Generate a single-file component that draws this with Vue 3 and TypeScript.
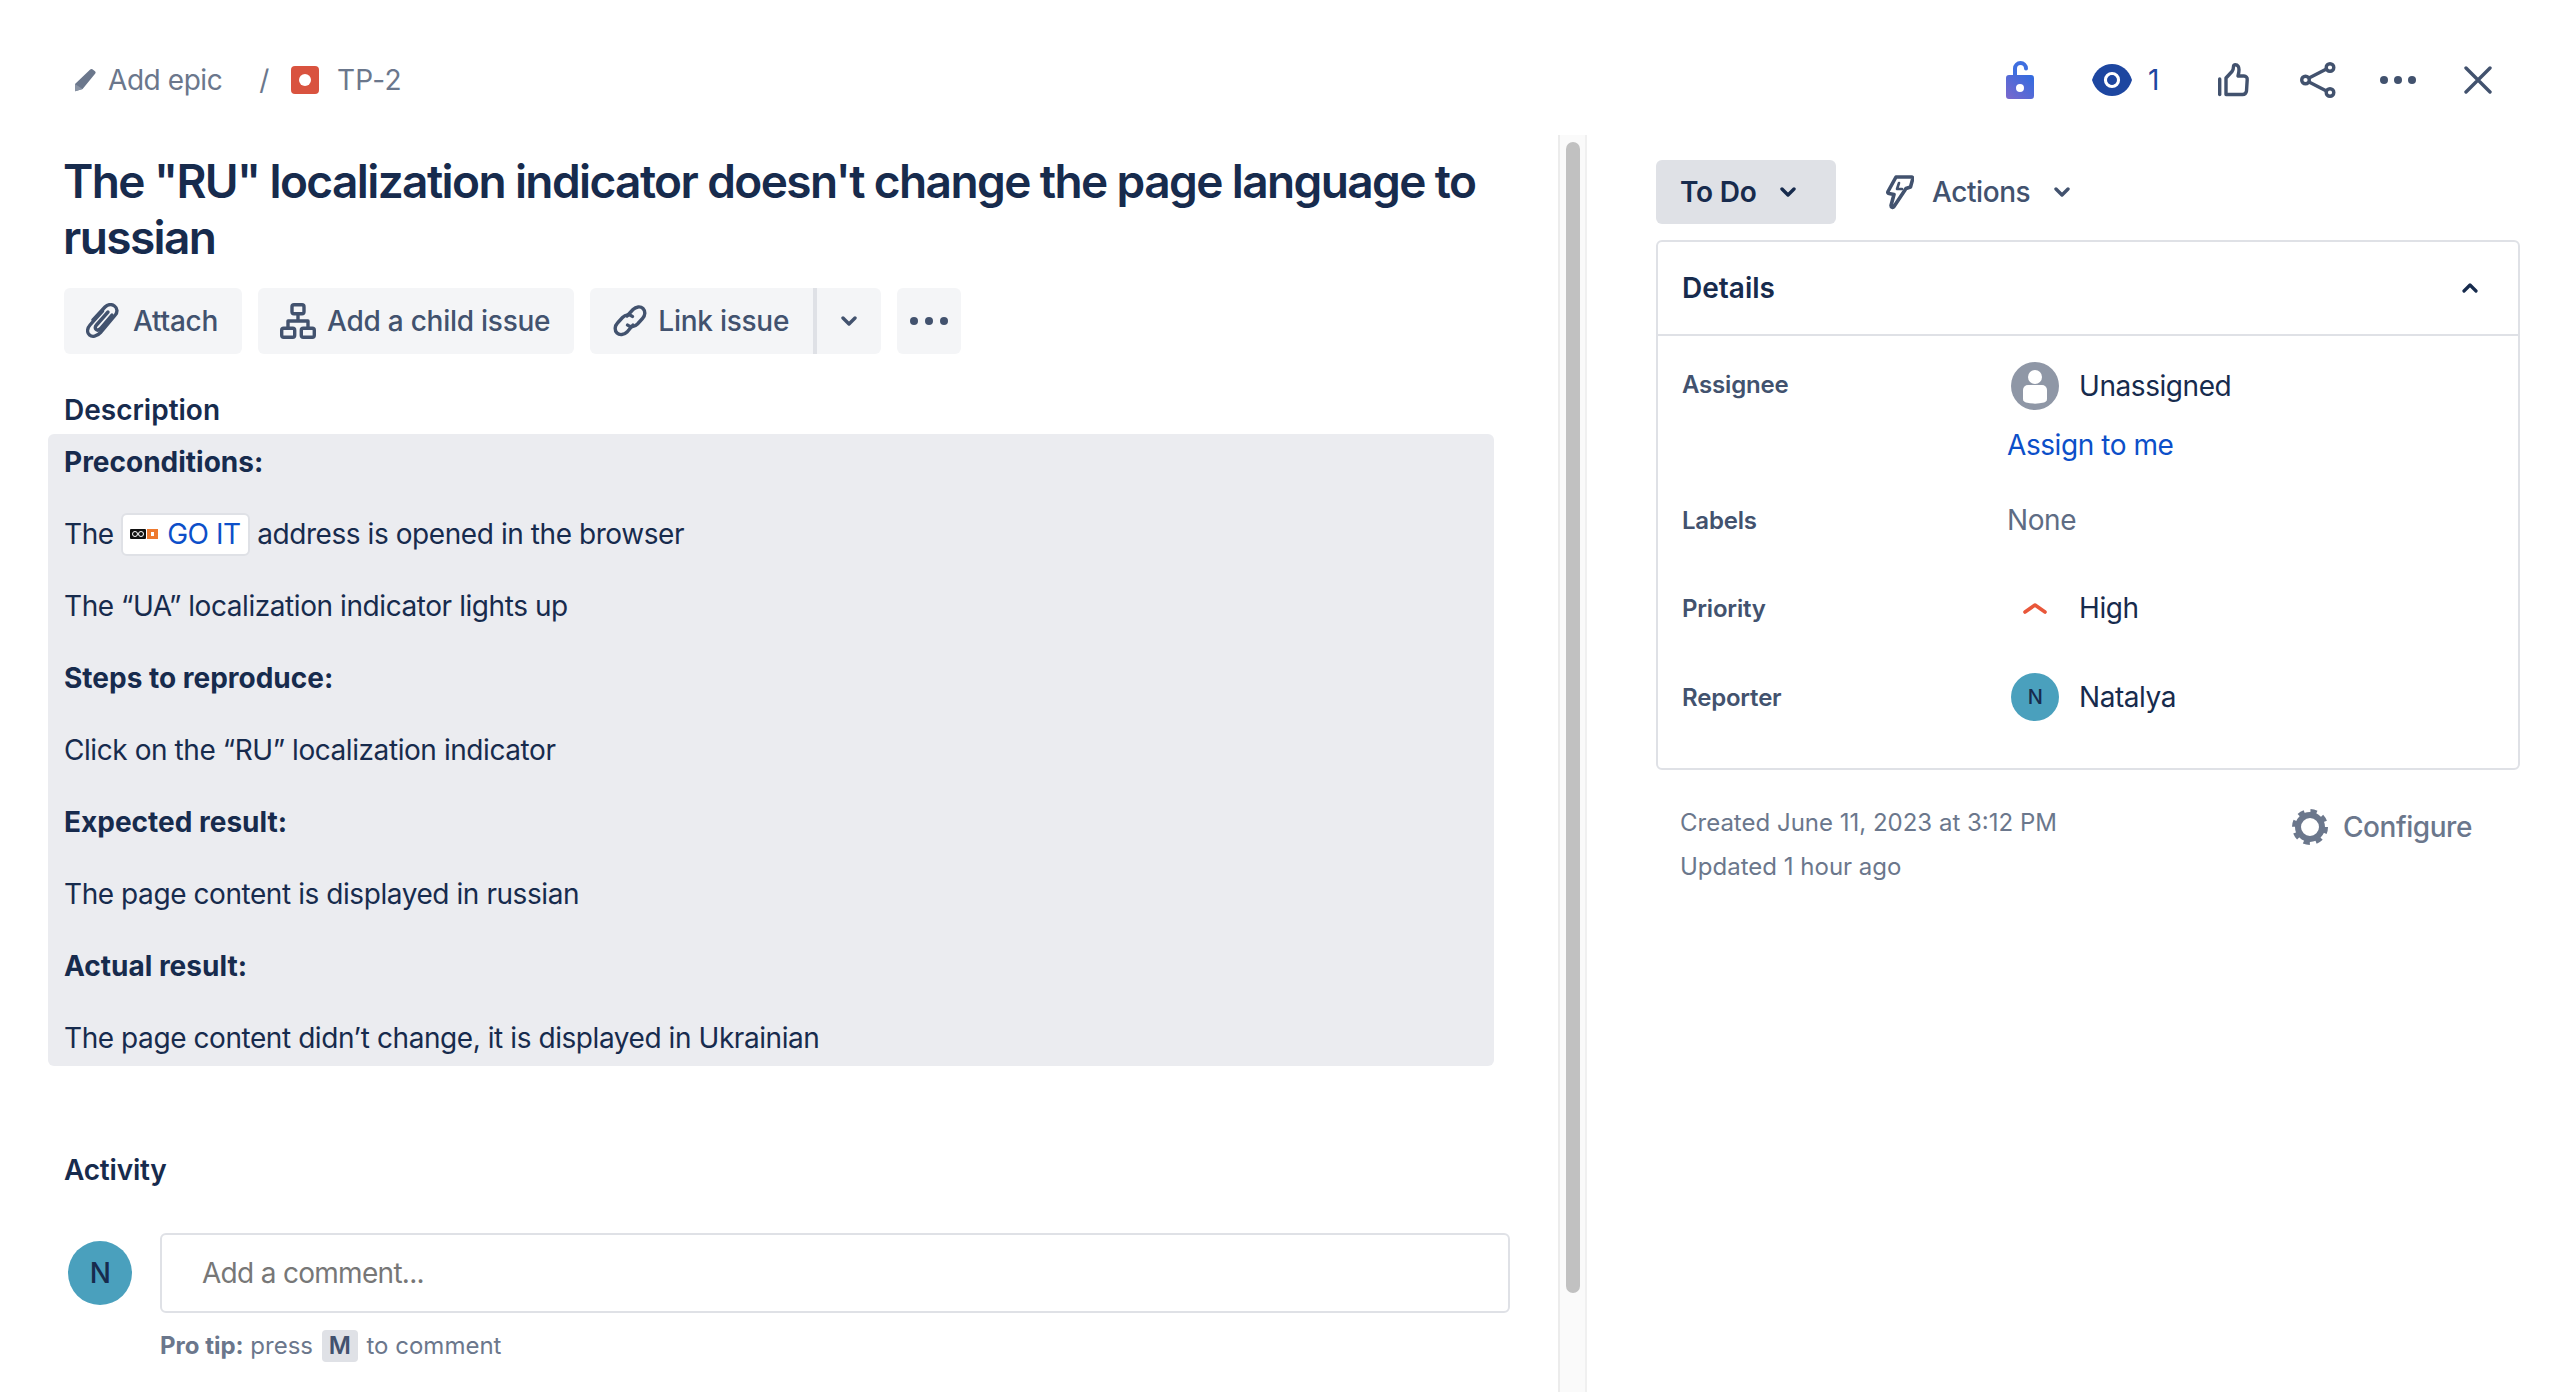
<script setup lang="ts">
type Block = { text: string; strong?: boolean };

const afterLink: Block[] = [
  { text: "The “UA” localization indicator lights up" },
  { text: "Steps to reproduce:", strong: true },
  { text: "Click on the “RU” localization indicator" },
  { text: "Expected result:", strong: true },
  { text: "The page content is displayed in russian" },
  { text: "Actual result:", strong: true },
  { text: "The page content didn’t change, it is displayed in Ukrainian" },
];
</script>

<template>
  <div class="modal">
    <header class="topbar">
      <div class="crumbs">
        <svg class="pencil" width="24" height="24" viewBox="0 0 24 24" aria-hidden="true">
          <path d="M17.2 1.6a1.6 1.6 0 0 1 2.2-.3l2.6 2a1.6 1.6 0 0 1 .3 2.2L9.6 21 2.2 23.2 2 16z" fill="#6b778c" />
          <path d="M2 16l7.600 5-7.400 2.200z" fill="#8993a4" />
        </svg>
        <span class="crumb-text">Add epic</span>
        <span class="crumb-slash">/</span>
        <span class="bug"><span class="bug-dot"></span></span>
        <span class="crumb-text crumb-key">TP-2</span>
      </div>
      <div class="top-actions">
        <svg class="lock" width="28" height="38" viewBox="0 0 28 38" aria-hidden="true">
          <defs>
            <linearGradient id="lockGrad" x1="1" y1="0" x2="0" y2="1">
              <stop offset="0" stop-color="#2f6be0" />
              <stop offset="1" stop-color="#7b68cc" />
            </linearGradient>
          </defs>
          <path d="M9 15V7.500a5.500 5.500 0 0 1 11 0" fill="none" stroke="#3f6fe0" stroke-width="4" stroke-linecap="round" />
          <path fill-rule="evenodd" d="M3 14h22a3 3 0 0 1 3 3v18a3 3 0 0 1-3 3H3a3 3 0 0 1-3-3V17a3 3 0 0 1 3-3zm11 9a4 4 0 1 0 0 8 4 4 0 0 0 0-8z" fill="url(#lockGrad)" />
        </svg>
        <span class="watch">
          <svg width="40" height="32" viewBox="0 0 40 32" aria-hidden="true">
            <path d="M0 16C3 6 11 0 20 0s17 6 20 16c-3 10-11 16-20 16S3 26 0 16z" fill="#1d46a0" />
            <circle cx="20" cy="16" r="6.500" fill="none" stroke="#fff" stroke-width="3.200" />
            <circle cx="20" cy="16" r="4.600" fill="#1d46a0" />
          </svg>
          <span class="watch-count">1</span>
        </span>
        <svg class="thumb" width="32" height="34" viewBox="0 0 32 34" fill="none" stroke="#42526e" stroke-width="3.400" stroke-linejoin="round" stroke-linecap="round" aria-hidden="true">
          <path d="M1.700 16v15.500" />
          <path d="M8 31.500V15l6-6.500c1-1.500 1.500-3 1.500-5 0-1 .7-1.800 1.800-1.800 2.500 0 3.700 2.500 3.700 5 0 2.300-.5 4.500-1 6.300h6c2 0 3.500 1.700 3.200 3.700L28.500 28c-.3 2-1.700 3.500-4 3.500z" />
        </svg>
        <svg class="share" width="36" height="36" viewBox="0 0 36 36" fill="none" stroke="#42526e" stroke-width="3.400" aria-hidden="true">
          <circle cx="5.500" cy="18" r="3.800" />
          <circle cx="30" cy="5.500" r="3.800" />
          <circle cx="30" cy="30.500" r="3.800" />
          <path d="M9 16l17.500-9M9 20l17.500 9" />
        </svg>
        <svg class="dots" width="36" height="10" viewBox="0 0 36 10" fill="#42526e" aria-hidden="true">
          <circle cx="4" cy="5" r="4" />
          <circle cx="18" cy="5" r="4" />
          <circle cx="32" cy="5" r="4" />
        </svg>
        <svg class="close" width="28" height="28" viewBox="0 0 28 28" fill="none" stroke="#42526e" stroke-width="3.400" stroke-linecap="round" aria-hidden="true">
          <path d="M2 2l24 24M26 2L2 26" />
        </svg>
      </div>
    </header>

    <div class="body">
      <main class="main">
        <h1 class="title">The "RU" localization indicator doesn't change the page language to russian</h1>

        <div class="toolbar">
          <button class="tool attach">
            <svg width="34" height="36" viewBox="0 0 34 36" fill="none" stroke="#42526e" stroke-width="3.400" stroke-linecap="round" aria-hidden="true">
              <path d="M7 17L19 4c2.700-2.800 6.500-3.200 9.500-1s3.200 6.200.8 9L14.500 29.500c-3.700 4-8.300 5-11 2.500S1 25.500 4 22L16.500 8" />
              <path d="M22 9L10.500 22c-1.600 1.800-1.600 3.500-.4 4.500s2.900.6 4.400-1L26 12" />
            </svg>
            Attach
          </button>
          <button class="tool child">
            <svg width="36" height="36" viewBox="0 0 36 36" fill="none" stroke="#42526e" stroke-width="3.400" stroke-linejoin="round" aria-hidden="true">
              <rect x="12" y="1.700" width="12" height="9" rx="2" />
              <rect x="1.700" y="25.300" width="13" height="9" rx="2" />
              <rect x="21.300" y="25.300" width="13" height="9" rx="2" />
              <path d="M18 10.500V18M8 25.500V18h20v7.500" />
            </svg>
            Add a child issue
          </button>
          <div class="split">
            <button class="tool link">
              <svg width="36" height="34" viewBox="0 0 36 34" fill="none" stroke="#42526e" stroke-width="3.400" stroke-linecap="round" aria-hidden="true">
                <path d="M15 12l6-6.500c3-3 7.500-3.500 10-1s2.500 7-.5 10l-5 5.500c-3 3-7 3.500-10 1" />
                <path d="M21 21l-6 7c-3 3-7.500 3.500-10 1s-2.500-7 .5-10l5-5.500c3-3 7-3.500 10-1" />
              </svg>
              Link issue
            </button>
            <button class="tool caret" aria-label="More link options">
              <svg width="16" height="10" viewBox="0 0 16 10" fill="none" stroke="#42526e" stroke-width="3.400" stroke-linecap="round" stroke-linejoin="round" aria-hidden="true">
                <path d="M2 2l6 6 6-6" />
              </svg>
            </button>
          </div>
          <button class="tool more" aria-label="More">
            <svg width="38" height="10" viewBox="0 0 38 10" fill="#42526e" aria-hidden="true">
              <circle cx="4" cy="5" r="4" />
              <circle cx="19" cy="5" r="4" />
              <circle cx="34" cy="5" r="4" />
            </svg>
          </button>
        </div>

        <h2 class="section-title description-title">Description</h2>
        <section class="description">
          <p class="line strong">Preconditions:</p>
          <p class="line">
            The
            <a class="chip">
              <svg width="28" height="10" viewBox="0 0 28 10" aria-hidden="true">
                <rect width="16" height="10" rx="1" fill="#111" />
                <circle cx="5" cy="5" r="2.500" fill="none" stroke="#fff" stroke-width="1" />
                <circle cx="11" cy="5" r="2.500" fill="none" stroke="#fff" stroke-width="1" />
                <rect x="17" width="11" height="10" fill="#ee7a2f" />
                <rect x="21" y="3" width="3" height="4" fill="#fff" />
              </svg>
              <span>GO IT</span>
            </a>
            address is opened in the browser
          </p>
          <p v-for="b in afterLink" :key="b.text" class="line" :class="{ strong: b.strong }">{{ b.text }}</p>
        </section>

        <h2 class="section-title activity-title">Activity</h2>
        <div class="comment">
          <span class="avatar avatar-large">N</span>
          <div class="comment-box">Add a comment...</div>
        </div>
        <p class="tip"><b>Pro tip:</b> press <kbd>M</kbd> to comment</p>
      </main>

      <div class="scrollbar"><div class="scroll-thumb"></div></div>

      <aside class="side">
        <div class="status-row">
          <button class="status">
            To Do
            <svg width="16" height="10" viewBox="0 0 16 10" fill="none" stroke="#172b4d" stroke-width="3.400" stroke-linecap="round" stroke-linejoin="round" aria-hidden="true">
              <path d="M2 2l6 6 6-6" />
            </svg>
          </button>
          <button class="actions">
            <svg width="28" height="36" viewBox="0 0 28 36" fill="none" stroke="#42526e" stroke-width="3.600" stroke-linejoin="round" stroke-linecap="round" aria-hidden="true">
              <path d="M10 3h15.500c1 0 1.500.8 1.300 1.700L24.500 13l-4.500 1.500L8 32.500c-1 1.500-3 1-3-1l3-11-5-1c-1-.2-1.500-1-1-2z" />
              <path d="M13 9l-2 6h5" stroke-width="2.600" />
            </svg>
            <span>Actions</span>
            <svg width="16" height="10" viewBox="0 0 16 10" fill="none" stroke="#42526e" stroke-width="3.400" stroke-linecap="round" stroke-linejoin="round" aria-hidden="true">
              <path d="M2 2l6 6 6-6" />
            </svg>
          </button>
        </div>

        <section class="details">
          <div class="details-head">
            <span>Details</span>
            <svg width="16" height="10" viewBox="0 0 16 10" fill="none" stroke="#172b4d" stroke-width="3.200" stroke-linecap="round" stroke-linejoin="round" aria-hidden="true">
              <path d="M2 8l6-6 6 6" />
            </svg>
          </div>
          <div class="details-body">
            <div class="field assignee">
              <span class="field-label">Assignee</span>
              <div class="field-value">
                <div class="value-line">
                  <svg class="value-icon" width="48" height="48" viewBox="0 0 48 48" aria-hidden="true">
                    <circle cx="24" cy="24" r="24" fill="#8f97a6" />
                    <circle cx="24" cy="15" r="7" fill="#fff" />
                    <path d="M12 28a5 5 0 0 1 5-5h14a5 5 0 0 1 5 5v9c0 2-1.500 3-3 3.500-6 1.500-12 1.500-18 0-1.500-.5-3-1.500-3-3.500z" fill="#fff" />
                  </svg>
                  <span>Unassigned</span>
                </div>
                <a class="assign">Assign to me</a>
              </div>
            </div>
            <div class="field labels">
              <span class="field-label">Labels</span>
              <span class="none">None</span>
            </div>
            <div class="field priority">
              <span class="field-label">Priority</span>
              <div class="value-line">
                <span class="value-icon">
                  <svg width="24" height="12" viewBox="0 0 24 12" fill="none" stroke="#e9573a" stroke-width="3.600" stroke-linecap="round" stroke-linejoin="round" aria-hidden="true">
                    <path d="M2 10l10-7 10 7" />
                  </svg>
                </span>
                <span>High</span>
              </div>
            </div>
            <div class="field reporter">
              <span class="field-label">Reporter</span>
              <div class="value-line">
                <span class="avatar value-icon">N</span>
                <span>Natalya</span>
              </div>
            </div>
          </div>
        </section>

        <div class="meta">
          <div class="dates">
            <p>Created June 11, 2023 at 3:12 PM</p>
            <p>Updated 1 hour ago</p>
          </div>
          <div class="configure">
            <svg width="36" height="36" viewBox="0 0 36 36" fill="none" stroke="#6b778c" aria-hidden="true">
              <circle cx="18" cy="18" r="12" stroke-width="6" />
              <circle cx="18" cy="18" r="15.500" stroke-width="5" stroke-dasharray="6.170 6" />
            </svg>
            <span>Configure</span>
          </div>
        </div>
      </aside>
    </div>
  </div>
</template>

<style>
html,
body {
  margin: 0;
  background: #fff;
  overflow: hidden;
}
</style>

<style scoped>
.modal {
  height: 1392px;
  overflow: hidden;
  display: flex;
  flex-direction: column;
  font-family: Inter, "Liberation Sans", sans-serif;
  font-size: 28px;
  letter-spacing: -0.43px;
  color: #172b4d;
  background: #fff;
}

.topbar {
  height: 135px;
  flex: none;
  box-sizing: border-box;
  padding: 0 68px 0 73px;
  display: flex;
  justify-content: space-between;
  align-items: flex-start;
}

.crumbs {
  height: 160px;
  display: flex;
  align-items: center;
  color: #6b778c;
}

.pencil {
  margin-right: 11px;
}

.crumb-key {
  letter-spacing: 0.3px;
}

.crumb-slash {
  margin: 0 22px 0 37px;
  color: #6b778c;
}

.bug {
  width: 28px;
  height: 28px;
  margin-right: 18px;
  border-radius: 4px;
  background: #d9533f;
  display: flex;
  align-items: center;
  justify-content: center;
}

.bug-dot {
  width: 12px;
  height: 12px;
  border-radius: 50%;
  background: #fff;
}

.top-actions {
  height: 160px;
  display: flex;
  align-items: center;
}

.lock {
  margin-right: 58px;
}

.watch {
  display: flex;
  align-items: center;
  margin-right: 59px;
  color: #1d46a0;
}

.watch-count {
  margin-left: 16px;
  font-size: 28px;
}

.thumb {
  margin-right: 50px;
}

.share {
  margin-right: 44px;
}

.dots {
  margin-right: 48px;
}

.body {
  flex: 1;
  min-height: 0;
  display: flex;
}

.main {
  width: 1558px;
  flex: none;
  box-sizing: border-box;
  padding-left: 64px;
}

.title {
  width: 1430px;
  margin: 18px 0 0 -1px;
  font-size: 46px;
  font-weight: 600;
  line-height: 56px;
  letter-spacing: -1.6px;
  color: #172b4d;
}

.toolbar {
  margin-top: 23px;
  display: flex;
  gap: 16px;
}

.split {
  display: flex;
}

.tool {
  height: 66px;
  border: 0;
  border-radius: 6px;
  background: #f4f5f7;
  color: #42526e;
  font: 500 28px Inter, sans-serif;
  letter-spacing: -0.25px;
  display: flex;
  align-items: center;
  gap: 13px;
  padding: 0 24px 0 22px;
}

.tool.child {
  gap: 11px;
}

.split .link {
  gap: 10px;
  border-radius: 6px 0 0 6px;
  border-right: 4px solid #dfe1e6;
  padding-right: 24px;
}

.split .caret {
  width: 64px;
  padding: 0;
  justify-content: center;
  border-radius: 0 6px 6px 0;
}

.more {
  width: 64px;
  padding: 0;
  justify-content: center;
}

.section-title {
  margin: 0;
  font-size: 28px;
  font-weight: 600;
  line-height: 36px;
  letter-spacing: 0;
  color: #172b4d;
}

.description-title {
  margin-top: 38px;
}

.description {
  width: 1446px;
  height: 632px;
  margin: 6px 0 0 -16px;
  box-sizing: border-box;
  padding: 0 16px;
  border-radius: 6px;
  background: #ebecf0;
}

.line {
  height: 72px;
  margin: 0;
  line-height: 57px;
  white-space: nowrap;
}

.line.strong {
  font-weight: 700;
  letter-spacing: 0;
}

.chip {
  display: inline-flex;
  align-items: center;
  gap: 9px;
  height: 43px;
  margin-bottom: 4px;
  padding: 0 7px;
  box-sizing: border-box;
  vertical-align: middle;
  border: 2px solid #dfe1e6;
  border-radius: 6px;
  background: #fff;
  color: #0c4fc9;
}

.activity-title {
  margin-top: 86px;
  letter-spacing: -0.2px;
}

.comment {
  margin-top: 45px;
  display: flex;
  align-items: center;
  margin-left: 4px;
}

.comment-box {
  width: 1350px;
  height: 80px;
  margin-left: 28px;
  box-sizing: border-box;
  border: 2px solid #dfe1e6;
  border-radius: 6px;
  padding-left: 40px;
  line-height: 76px;
  letter-spacing: -0.7px;
  color: #777;
}

.avatar {
  width: 48px;
  height: 48px;
  flex: none;
  border-radius: 50%;
  background: #4aa0bd;
  color: #172b4d;
  font-size: 20px;
  font-weight: 500;
  display: flex;
  align-items: center;
  justify-content: center;
}

.avatar-large {
  width: 64px;
  height: 64px;
  font-size: 28px;
}

.tip {
  margin: 15px 0 0 96px;
  font-size: 24px;
  line-height: 36px;
  letter-spacing: 0;
  color: #6b778c;
}

.tip kbd {
  display: inline-block;
  width: 36px;
  height: 32px;
  margin: 0 2px;
  border-radius: 4px;
  background: #dfe1e6;
  color: #42526e;
  font: 600 24px/32px Inter, sans-serif;
  text-align: center;
}

.scrollbar {
  width: 29px;
  flex: none;
  box-sizing: border-box;
  border-left: 2px solid #ececec;
  border-right: 2px solid #f0f0f0;
  background: #fafafa;
  padding: 7px 5px 0 6px;
}

.scroll-thumb {
  height: 1151px;
  border-radius: 8px;
  background: #c1c1c1;
}

.side {
  flex: 1;
  box-sizing: border-box;
  padding: 25px 40px 0 69px;
}

.status-row {
  display: flex;
  align-items: center;
}

.status {
  width: 180px;
  height: 64px;
  border: 0;
  border-radius: 6px;
  background: #dfe1e6;
  color: #172b4d;
  font: 600 28px Inter, sans-serif;
  letter-spacing: -0.2px;
  display: flex;
  align-items: center;
  gap: 23px;
  padding: 0 0 0 24px;
}

.actions {
  margin-left: 50px;
  border: 0;
  background: none;
  color: #42526e;
  padding: 0;
  font: 500 28px Inter, sans-serif;
  letter-spacing: -0.43px;
  display: flex;
  align-items: center;
}

.actions span {
  margin: 0 24px 0 18px;
}

.details {
  margin-top: 16px;
  height: 530px;
  box-sizing: border-box;
  border: 2px solid #dfe1e6;
  border-radius: 6px;
}

.details-head {
  height: 94px;
  box-sizing: border-box;
  border-bottom: 2px solid #dfe1e6;
  padding: 0 40px 0 24px;
  display: flex;
  align-items: center;
  justify-content: space-between;
  font-weight: 600;
  letter-spacing: 0;
}

.details-body {
  padding: 0 24px;
}

.field {
  display: flex;
  align-items: center;
}

.field-label {
  width: 325px;
  flex: none;
  font-size: 24px;
  font-weight: 600;
  letter-spacing: -0.2px;
  color: #42526e;
}

.assignee {
  align-items: flex-start;
  padding-top: 26px;
}

.assignee .field-label {
  margin-top: 8px;
}

.field-value {
  display: flex;
  flex-direction: column;
}

.value-line {
  height: 48px;
  display: flex;
  align-items: center;
  gap: 20px;
}

.value-icon {
  width: 48px;
  height: 48px;
  margin-left: 4px;
  display: flex;
  align-items: center;
  justify-content: center;
}

.assign {
  margin-top: 17px;
  line-height: 36px;
  color: #0c4fc9;
}

.labels {
  margin-top: 33px;
  height: 48px;
}

.none {
  color: #5e6c84;
}

.priority {
  margin-top: 40px;
}

.reporter {
  margin-top: 41px;
}

.meta {
  padding: 31px 48px 0 24px;
  display: flex;
  justify-content: space-between;
  align-items: flex-start;
}

.dates {
  font-size: 24px;
  letter-spacing: 0;
  color: #6b778c;
}

.dates p {
  margin: 0;
  line-height: 44px;
}

.configure {
  margin-top: 8px;
  display: flex;
  align-items: center;
  gap: 15px;
  font-weight: 500;
  color: #6b778c;
}
</style>
